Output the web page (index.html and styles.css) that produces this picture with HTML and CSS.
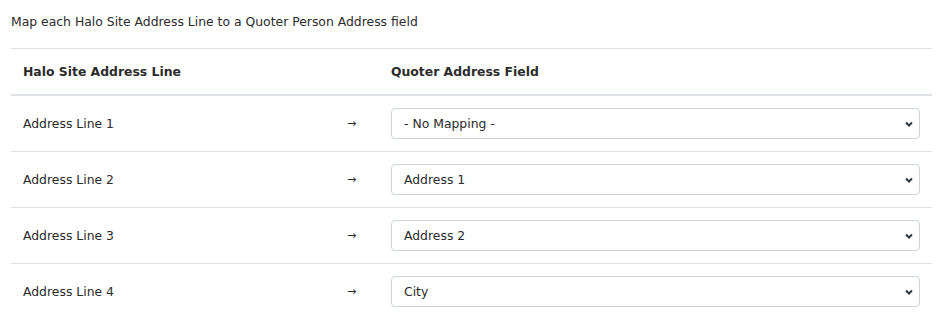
FILE: index.html
```html
<!DOCTYPE html>
<html lang="en">
<head>
    <meta charset="UTF-8">
    <meta name="viewport" content="width=device-width, initial-scale=1.0">
    <title>Address Mapping</title>
    <link rel="stylesheet" href="styles.css">
</head>
<body>
    <div class="container">
      <p class="intro">Map each Halo Site Address Line to a Quoter Person Address field</p>
      <table class="map-table">
        <colgroup>
          <col class="col-halo">
          <col class="col-arrow">
          <col class="col-quoter">
        </colgroup>
        <thead>
          <tr>
            <th>Halo Site Address Line</th>
            <th></th>
            <th>Quoter Address Field</th>
          </tr>
        </thead>
        <tbody>
          <tr>
            <td>Address Line 1</td>
            <td class="arrow">&rarr;</td>
            <td>
              <div class="select-wrap">
                <select name="line1">
                  <option selected>- No Mapping -</option>
                  <option>Address 1</option>
                  <option>Address 2</option>
                  <option>City</option>
                </select>
                <svg class="chevron" width="10" height="8" viewBox="0 0 10 8"><path d="M2 2.5 L5 5.5 L8 2.5" fill="none" stroke="#343a40" stroke-width="2"/></svg>
              </div>
            </td>
          </tr>
          <tr>
            <td>Address Line 2</td>
            <td class="arrow">&rarr;</td>
            <td>
              <div class="select-wrap">
                <select name="line2">
                  <option>- No Mapping -</option>
                  <option selected>Address 1</option>
                  <option>Address 2</option>
                  <option>City</option>
                </select>
                <svg class="chevron" width="10" height="8" viewBox="0 0 10 8"><path d="M2 2.5 L5 5.5 L8 2.5" fill="none" stroke="#343a40" stroke-width="2"/></svg>
              </div>
            </td>
          </tr>
          <tr>
            <td>Address Line 3</td>
            <td class="arrow">&rarr;</td>
            <td>
              <div class="select-wrap">
                <select name="line3">
                  <option>- No Mapping -</option>
                  <option>Address 1</option>
                  <option selected>Address 2</option>
                  <option>City</option>
                </select>
                <svg class="chevron" width="10" height="8" viewBox="0 0 10 8"><path d="M2 2.5 L5 5.5 L8 2.5" fill="none" stroke="#343a40" stroke-width="2"/></svg>
              </div>
            </td>
          </tr>
          <tr>
            <td>Address Line 4</td>
            <td class="arrow">&rarr;</td>
            <td>
              <div class="select-wrap">
                <select name="line4">
                  <option>- No Mapping -</option>
                  <option>Address 1</option>
                  <option>Address 2</option>
                  <option selected>City</option>
                </select>
                <svg class="chevron" width="10" height="8" viewBox="0 0 10 8"><path d="M2 2.5 L5 5.5 L8 2.5" fill="none" stroke="#343a40" stroke-width="2"/></svg>
              </div>
            </td>
          </tr>
        </tbody>
      </table>
    </div>
</body>
</html>
```

FILE: styles.css
```css
* {
  margin: 0;
  padding: 0;
  box-sizing: border-box;
}
body {
  font-family: "DejaVu Sans", Verdana, sans-serif;
  font-size: 12.4px;
  line-height: 20px;
  color: #2b2b2b;
  background-color: #fff;
}
.container {
  padding: 12px 12px 0 11px;
}
.intro {
  margin-bottom: 16px;
}
.map-table {
  width: 100%;
  border-collapse: collapse;
}
.col-halo {
  width: 324px;
}
.col-arrow {
  width: 44px;
}
.map-table th {
  text-align: left;
  font-weight: bold;
  padding: 13px 12px 12px;
  border-top: 1px solid #dee2e6;
  border-bottom: 2px solid #dee2e6;
}
.map-table td {
  padding: 12px;
  border-top: 1px solid #dee2e6;
  vertical-align: middle;
}
.map-table tbody tr:first-child td {
  border-top: none;
}
.arrow {
  font-size: 11px;
}
.select-wrap {
  position: relative;
}
.select-wrap select {
  display: block;
  width: 100%;
  height: 31px;
  padding: 0 28px 0 12px;
  font-family: inherit;
  font-size: 12.4px;
  color: #2b2b2b;
  background-color: #fff;
  border: 1px solid #ced4da;
  border-radius: 4px;
  -webkit-appearance: none;
  appearance: none;
}
.chevron {
  position: absolute;
  right: 6px;
  top: 12px;
  pointer-events: none;
}
```
